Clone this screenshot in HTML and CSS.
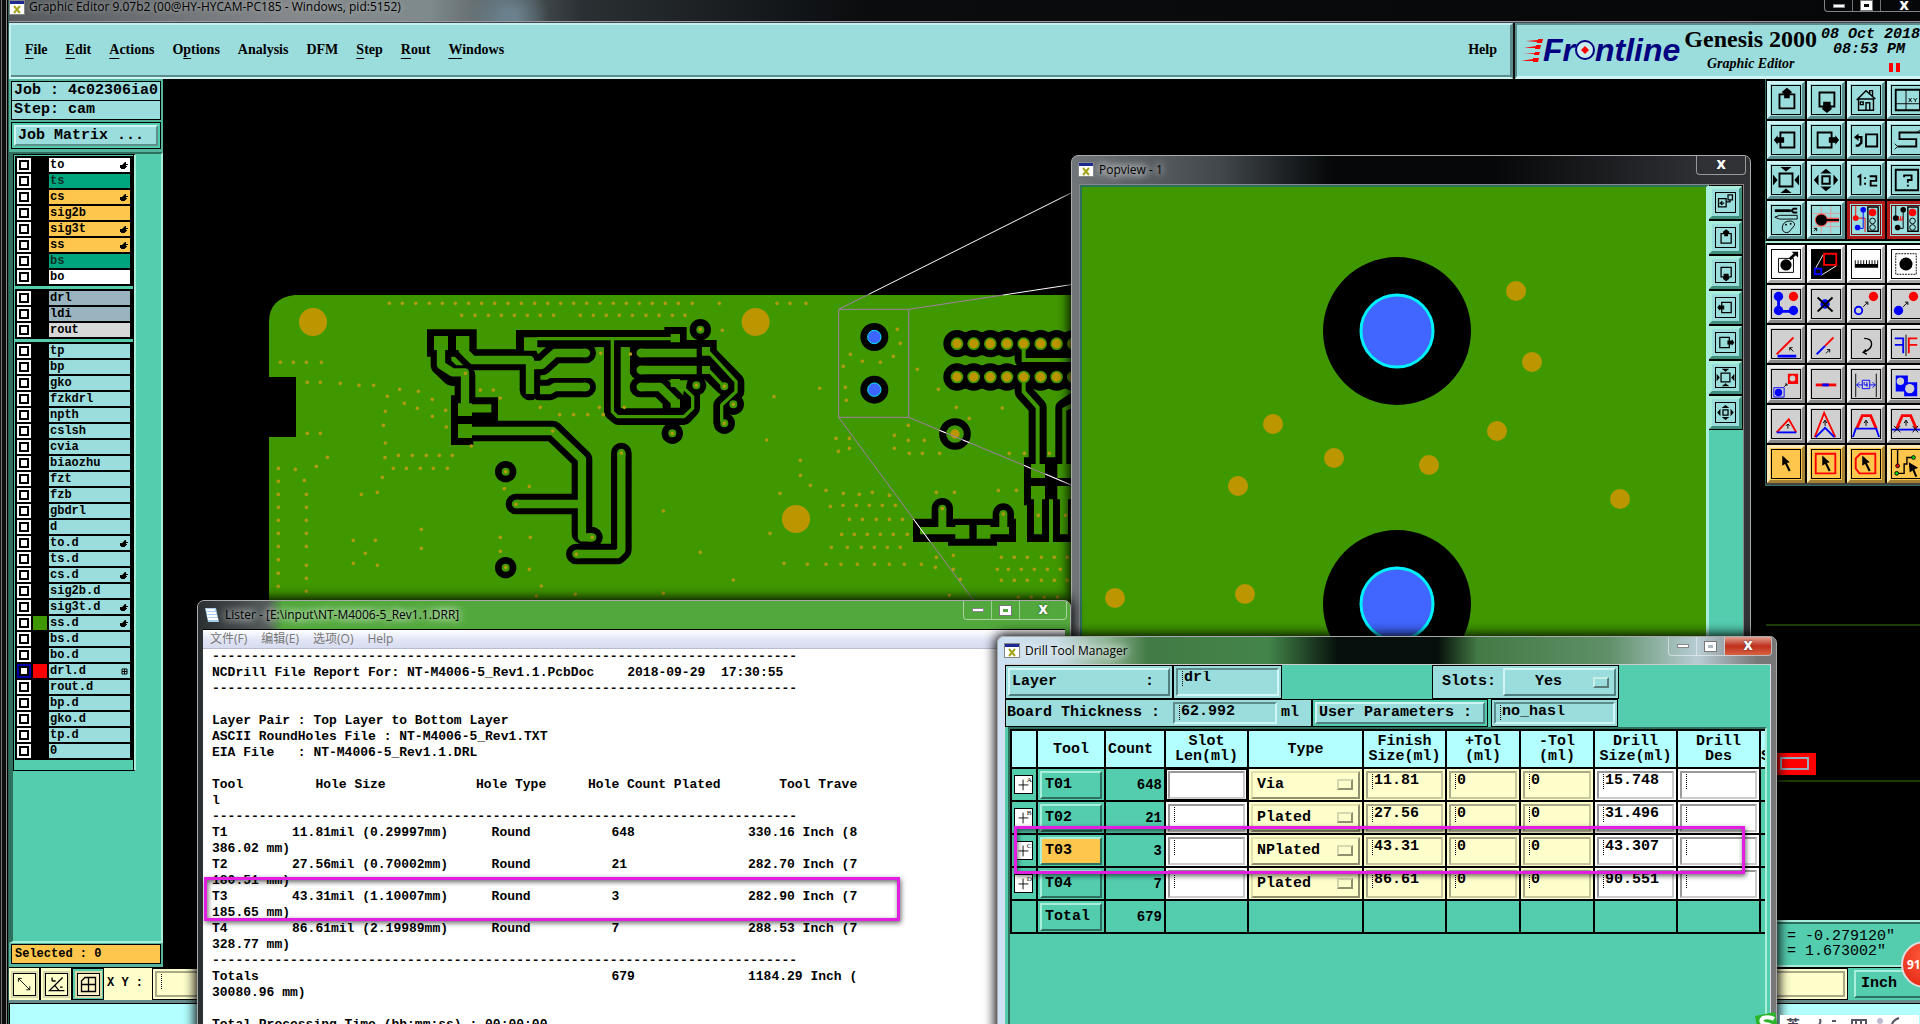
FILE: index.html
```html
<!DOCTYPE html>
<html lang="en">
<head>
<meta charset="utf-8">
<title>Graphic Editor 9.07b2</title>
<link rel="stylesheet" href="styles.css">
</head>
<body>
<svg class="defs" aria-hidden="true">
  <symbol id="hand" viewBox="0 0 8 8"><path d="M0 4h2l3-3h1v2h2v1H6v1h1v1H6v1H5v1H1V7H0z"/></symbol>
  <symbol id="xwin" viewBox="0 0 16 15"><path d="M0 0h16v15H0z" fill="#888"/><path d="M1 4h14v10H1z" fill="#fff"/><path d="M1 1h14v3H1z" fill="#1a2a90"/><path d="M5 6l6 7M11 6l-6 7" stroke="#a5a51a" stroke-width="2"/></symbol>
  <symbol id="i-up" viewBox="0 0 30 30"><path d="M8 9h16v15H8z" fill="none" stroke="#000" stroke-width="2"/><path d="M16 2l5 4v2h-2v5h-6V8h-2V6z"/></symbol>
  <symbol id="i-down" viewBox="0 0 30 30"><path d="M8 7h16v15H8z" fill="none" stroke="#000" stroke-width="2"/><path d="M16 29l-5-4v-2h1v-6h8v6h1v2z"/></symbol>
  <symbol id="i-left" viewBox="0 0 30 30"><path d="M9 7h15v16H9z" fill="none" stroke="#000" stroke-width="2"/><path d="M2 15l4-5v2h7v6H6v2z"/></symbol>
  <symbol id="i-right" viewBox="0 0 30 30"><path d="M6 7h15v16H6z" fill="none" stroke="#000" stroke-width="2"/><path d="M29 15l-4-5v2h-7v6h7v2z"/></symbol>
  <symbol id="i-in" viewBox="0 0 30 30"><path d="M8 8h14v14H8z" fill="none" stroke="#000" stroke-width="2"/><path d="M9 1h12l-6 5zM9 29h12l-6-5zM1 9v12l5-6zM29 9v12l-5-6z"/></symbol>
  <symbol id="i-out" viewBox="0 0 30 30"><path d="M11 11h8v8h-8z" fill="none" stroke="#000" stroke-width="2"/><path d="M9 8h12l-6-5zM9 22h12l-6 5zM7 9v12l-5-6zM23 9v12l5-6z"/></symbol>
  <symbol id="i-pop" viewBox="0 0 30 30"><g fill="none" stroke="#000" stroke-width="2"><path d="M4 9h12v13H4zM19 3h7v8h-7zM16 14h6v-3"/><path d="M13 16H7l3-3m-3 3l3 3"/></g></symbol>
</svg>

<div class="desktop">
  <div class="frame-edge"></div>
  <div class="editor">
    <header class="titlebar">
      <svg class="app-icon" width="16" height="15"><use href="#xwin"/></svg>
      <h1>Graphic Editor 9.07b2 (00@HY-HYCAM-PC185 - Windows, pid:5152)</h1>
      <div class="win-buttons main-buttons"><button aria-label="Minimize"><i class="min"></i></button><button aria-label="Maximize"><i class="max"></i></button><button class="close" aria-label="Close">x</button></div>
    </header>

    <div class="topbar">
      <nav class="menubar">
        <button><u>F</u>ile</button><button><u>E</u>dit</button><button><u>A</u>ctions</button><button>O<u>p</u>tions</button><button>Analysis</button><button>DFM</button><button><u>S</u>tep</button><button><u>R</u>out</button><button><u>W</u>indows</button>
        <button class="help">Help</button>
      </nav>
      <div class="brand">
        <div class="logo">
          <svg width="22" height="24" viewBox="0 0 22 24" fill="#f00"><path d="M5 3l12-1V1h5l-1 4h-5V4zM3 10l12-2V7h5l-1 4h-5v-1zM2 16l12-1v-1h5l-1 3h-5v-1zM0 23l12-2v-1h6l-1 4h-5v-1z"/></svg>
          <span>Fr</span><svg width="20" height="20" viewBox="0 0 20 20"><circle cx="10" cy="10" r="9" fill="#c8eef0" stroke="#000080" stroke-width="2"/><path d="M10 6l4 4-4 4-4-4z" fill="#f00"/></svg><span>ntline</span>
        </div>
        <div class="product"><strong>Genesis 2000</strong><em>Graphic Editor</em></div>
        <div class="clock"><span>08 Oct 2018</span><span class="time">08:53 PM</span><i class="pause"></i></div>
      </div>
    </div>

    <div class="workspace">
      <aside class="side">
        <div class="job"><p>Job : 4c02306ia0</p><p>Step: cam</p><div class="matrix"><button>Job Matrix ...</button></div></div>
        <div class="layers">
          <div class="layer-frame">
            <ul>
              <li><label><input type="checkbox"><i></i><span class="white">to<svg><use href="#hand"/></svg></span></label></li>
              <li><label><input type="checkbox"><i></i><span class="mask">ts</span></label></li>
              <li><label><input type="checkbox"><i></i><span class="amber">cs<svg><use href="#hand"/></svg></span></label></li>
              <li><label><input type="checkbox"><i></i><span class="amber">sig2b</span></label></li>
              <li><label><input type="checkbox"><i></i><span class="amber">sig3t<svg><use href="#hand"/></svg></span></label></li>
              <li><label><input type="checkbox"><i></i><span class="amber">ss<svg><use href="#hand"/></svg></span></label></li>
              <li><label><input type="checkbox"><i></i><span class="mask">bs</span></label></li>
              <li><label><input type="checkbox"><i></i><span class="white">bo</span></label></li>
            </ul>
            <ul>
              <li><label><input type="checkbox"><i></i><span class="steel">drl</span></label></li>
              <li><label><input type="checkbox"><i></i><span class="steel">ldi</span></label></li>
              <li><label><input type="checkbox"><i></i><span class="silver">rout</span></label></li>
            </ul>
            <ul>
              <li><label><input type="checkbox"><i></i><span>tp</span></label></li>
              <li><label><input type="checkbox"><i></i><span>bp</span></label></li>
              <li><label><input type="checkbox"><i></i><span>gko</span></label></li>
              <li><label><input type="checkbox"><i></i><span>fzkdrl</span></label></li>
              <li><label><input type="checkbox"><i></i><span>npth</span></label></li>
              <li><label><input type="checkbox"><i></i><span>cslsh</span></label></li>
              <li><label><input type="checkbox"><i></i><span>cvia</span></label></li>
              <li><label><input type="checkbox"><i></i><span>biaozhu</span></label></li>
              <li><label><input type="checkbox"><i></i><span>fzt</span></label></li>
              <li><label><input type="checkbox"><i></i><span>fzb</span></label></li>
              <li><label><input type="checkbox"><i></i><span>gbdrl</span></label></li>
              <li><label><input type="checkbox"><i></i><span>d</span></label></li>
              <li><label><input type="checkbox"><i></i><span>to.d<svg><use href="#hand"/></svg></span></label></li>
              <li><label><input type="checkbox"><i></i><span>ts.d</span></label></li>
              <li><label><input type="checkbox"><i></i><span>cs.d<svg><use href="#hand"/></svg></span></label></li>
              <li><label><input type="checkbox"><i></i><span>sig2b.d</span></label></li>
              <li><label><input type="checkbox"><i></i><span>sig3t.d<svg><use href="#hand"/></svg></span></label></li>
              <li><label><input type="checkbox"><i class="shown"></i><span>ss.d<svg><use href="#hand"/></svg></span></label></li>
              <li><label><input type="checkbox"><i></i><span>bs.d</span></label></li>
              <li><label><input type="checkbox"><i></i><span>bo.d</span></label></li>
              <li><label><input type="checkbox" class="work"><i class="active"></i><span>drl.d<svg class="snap" viewBox="0 0 8 8"><path d="M2 2h5v5H2zM4.500 2v5M2 4.500h5" fill="none" stroke="#000"/></svg></span></label></li>
              <li><label><input type="checkbox"><i></i><span>rout.d</span></label></li>
              <li><label><input type="checkbox"><i></i><span>bp.d</span></label></li>
              <li><label><input type="checkbox"><i></i><span>gko.d</span></label></li>
              <li><label><input type="checkbox"><i></i><span>tp.d</span></label></li>
              <li><label><input type="checkbox"><i></i><span>0</span></label></li>
            </ul>
          </div>
        </div>
        <p class="selected">Selected : 0</p>
      </aside>

      <main class="canvas">
        <svg width="1602" height="888" viewBox="163 79 1602 888">
          <path fill="#409800" d="M290 295H1400V800H269V437h27V377H269V322q0-24 26-27z"/>
          <g transform="translate(260 290) scale(.33333)">
            <path d="M501 118H650V178H768V120H1213V111H1280V150H1370V195H1310V252H1110V172H830V240H768V200H501zM573 316H640V322H714V400H640V465H573zM1208 322h80v40h-80z"/>
            <g fill="none" stroke="#000" stroke-width="62" stroke-linejoin="round" stroke-linecap="round">
              <path d="M543 160V225L577 257H615V355M608 160V180L638 210H810V300M810 225H845L885 189H977M840 300H870L885 291H977M1140 189H1320M1140 240H1320M1140 291H1200L1245 335M615 423H878L966 508V730L997 742M966 642H768M1084 489V780L1072 792H949"/>
              <path stroke-width="50" d="M1057 150V365L1075 380H1272L1295 355V310M1340 185L1428 275V305L1385 345V395M1340 240L1392 290"/>
            </g>
            <path fill="#409800" d="M1083 172H1108V352H1083zM1008 172h21v180h-21zM862 262l20-20h125v22H862z"/>
            <g><circle cx="1321" cy="119" r="32"/><circle cx="1309" cy="286" r="30"/><circle cx="1420" cy="343" r="32"/><circle cx="1393" cy="400" r="32"/><circle cx="1237" cy="430" r="32"/><circle cx="737" cy="545" r="32"/><circle cx="737" cy="833" r="32"/></g>
            <path fill="#409800" d="M522 138h42v42h-42zM588 138h40v42h-40zM792 142h40v40h-40zM1232 132h28v25h-28zM1326 171h24v26h-24zM1326 228h24v24h-24zM1232 267h28v24h-28zM1232 328h28v25h-28zM594 340h42v38h-42zM594 402h42v42h-42z"/>
            <g fill="none" stroke="#409800" stroke-width="25" stroke-linejoin="round">
              <path d="M543 160V225L577 247H615V355H694M608 160V180L638 210H810V312M810 225H845L885 189H977M840 300H870L885 291H977M1140 189H1310M1140 240H1310M1140 291H1200L1245 335M615 423H878L966 508V742H997M966 642H768M1084 489V780L1072 792H949"/>
              <path stroke-linecap="round" d="M970 189h8M970 291h8M1142 189h8M1142 240h8M1142 291h8M1084 489v8M768 642h8M949 792h8M997 742h-8"/>
              <path stroke-width="10" d="M830 146H1240M1057 150V365L1072 380H1272L1298 355V320L1258 282M1345 185L1428 275V305L1385 345V395M1345 240L1392 290"/>
            </g>
            <path stroke="#409800" stroke-width="24" stroke-linecap="round" d="M1321 119h0M1309 286h0M1420 343h0M1393 400h0M1393 289h0M1237 430h0M737 545h0M737 833h0"/>
            <path fill="#bb9600" d="M117 96a42 42 0 1 0 84 0a42 42 0 1 0-84 0M1445 96a42 42 0 1 0 84 0a42 42 0 1 0-84 0"/>
            <path fill="none" stroke="#b09b10" stroke-width="11" stroke-linecap="round" d="M388 40h0m39 0h0m40 0h0m41 0h0m39 0h0m39 0h0m40 0h0m39 0h0m39 0h0m40 0h0m40 0h0m40 0h0m39 0h0m39 0h0m39 0h0m39 0h0m40 0h0m40 0h0m39 0h0m39 0h0m39 0h0m39 0h0m39 0h0m42 0h0m81 0h0M605 76h0m40 0h0m40 0h0m39 0h0m39 0h0m39 0h0m39 0h0m40 0h0m80 0h0m39 0h0m39 0h0m39 0h0m39 0h0m41 0h0m39 0h0m40 0h0m38 0h0M61 217h0m39 0h0m39 0h0m45 0h0M142 277h0m39 0h0m60 3h0m56 6h0m44 0h0m78 12h0m56 6h0M382 319h0M433 340h0M517 328h0M472 355h0M376 364h0M517 379h0M557 361h0M370 406h0M559 411h0M142 430h0m39 0h0M376 459h0M375 503h0M415 496h0m42 0h0m42 0h0m39 0h0m39 0h0M400 535h0m39 0h0m42 0h0m39 0h0m42 0h0M634 468h0M202 502h0M169 529h0M106 538h0M133 571h0M367 562h0M304 613h0M352 607h0M55 535h0m0 39h0m0 39h0m0 39h0m0 39h0m0 39h0m0 39h0m0 40h0m0 41h0m0 39h0M139 613h0m0 39h0m0 39h0m0 39h0m0 39h0m0 57h0m0 39h0m0 39h0M484 718h0m0 57h0M280 751h0m66 0h0M316 790h0M280 820h0M352 826h0M616 250h0M661 300h0m39 0h0M721 324h0M841 352h0M899 374h0m42 0h0m42 0h0m47 0h0M1022 190h0M1018 352h0M1093 352h0M1111 192h0M878 423h0M1387 121h0M1321 118h0M1309 286h0M1393 289h0M1420 343h0M1393 400h0M1237 430h0M1084 489h0M737 545h0M733 596h0M808 589h0M768 643h0M1210 663h0M997 742h0M811 742h0M721 742h0m0 42h0M949 793h0M1321 787h0M737 832h0M808 838h0M844 888h0M829 919h0M946 913h0M1210 910h0M1420 870h0"/>
          </g>
          <g transform="translate(800 280) scale(.33333)">
            <g fill="none" stroke="#000" stroke-linecap="round" stroke-linejoin="round">
              <path stroke-width="82" d="M471 191h0m50 0h0m50 0h0m50 0h0m50 0h0m51 0h0m48 0h0m50 0h0M471 291h0m50 0h0m50 0h0m50 0h0m50 0h0m51 0h0m48 0h0m50 0h0"/>
              <path stroke-width="70" d="M471 191H830M471 291H830"/>
              <path stroke-width="54" d="M671 200V238H830M671 310V335L713 382V560M830 360L793 385V560"/>
              <path stroke-width="64" d="M427 686V725M610 702V730"/>
            </g>
            <path d="M672 532H830V676H812V786H759V658H747V786H681V676H672zM339 716H648V786H591V797H444V786H339z"/>
            <circle cx="465" cy="462" r="37" fill="#409800" stroke="#000" stroke-width="21"/>
            <path fill="none" stroke="#409800" stroke-width="12" d="M671 191V240H830M671 291V335L713 382V560M830 370L793 388V560"/>
            <path fill="#409800" d="M693 552h42v42h-42zM772 552h50v42h-50zM693 618h42v40h-42zM772 618h50v40h-50zM702 650h24v113h-24zM780 650h24v113h-24zM747 676h12v115h-12zM360 741h106v-6h42v41h-42v-13H360zM530 735h41v6h56v22h-56v13h-41zM415 686h24v60h-24zM598 702h24v50h-24z"/>
            <path stroke="#409800" stroke-width="24" stroke-linecap="round" d="M427 686h0M610 702h0"/>
            <path stroke="#409800" stroke-width="38" stroke-linecap="round" d="M471 191h0m50 0h0m50 0h0m50 0h0m50 0h0m51 0h0m48 0h0m50 0h0M471 291h0m50 0h0m50 0h0m50 0h0m50 0h0m51 0h0m48 0h0m50 0h0"/>
            <path stroke="#bb9600" stroke-width="28" stroke-linecap="round" d="M471 191h0m50 0h0m50 0h0m50 0h0m50 0h0m51 0h0m48 0h0m50 0h0M471 291h0m50 0h0m50 0h0m50 0h0m50 0h0m51 0h0m48 0h0m50 0h0M465 462h0"/>
            <circle cx="223" cy="171" r="42"/><circle cx="223" cy="329" r="42"/>
            <g fill="#3c64ff" stroke="#00e6ff" stroke-width="3"><circle cx="223" cy="171" r="20"/><circle cx="223" cy="329" r="20"/></g>
            <circle cx="-12" cy="717" r="42" fill="#bb9600"/>
            <path fill="none" stroke="#b09b10" stroke-width="11" stroke-linecap="round" d="M18 70h0M292 148h0M301 190h0M280 229h0M241 247h0M187 244h0M151 223h0M130 259h0M136 322h0M139 361h0M352 268h0M59 325h0M415 328h0M469 382h0M607 384h0M508 415h0M325 436h0M283 466h0M325 481h0M373 481h0M283 505h0M328 520h0M367 520h0M419 520h0M628 520h0M673 520h0M748 520h0M108 475h0M148 475h0M148 505h0M115 514h0M1 541h0M1 586h0M31 616h0M78 631h0M130 640h0M178 643h0M217 637h0M268 646h0M91 679h0M129 676h0m40 0h0m39 0h0m39 0h0m39 0h0M148 718h0m39 0h0m42 0h0m39 0h0m39 0h0M125 763h0m38 0h0m39 0h0m39 0h0m39 0h0m42 0h0M94 802h0m48 0h0m42 0h0m39 0h0m39 0h0m39 0h0M22 853h0m56 0h0m45 0h0m49 0h0m51 0h0m45 0h0m45 0h0m51 0h0M409 637h0m54 0h0M595 631h0m54 0h0M427 686h0M610 702h0M715 706h0M797 706h0M409 832h0M460 826h0M406 862h0M460 868h0M481 898h0M448 946h0M604 832h0m39 0h0m39 0h0m42 0h0m39 0h0m39 0h0M592 868h0m33 0h0m39 0h0m39 0h0m39 0h0m39 0h0M604 901h0m39 0h0m39 0h0m42 0h0m39 0h0m39 0h0M655 952h0m39 0h0m39 0h0m39 0h0M-30 70h0m-39 0h0M-78 350h0M-100 480h0M-60 640h0M-90 760h0M-48 850h0"/>
            <g fill="none" stroke="#a080a5" stroke-width="3"><path d="M116 88H326V412H116zM116 88L206 43M326 88L610 45M326 412L830 622M116 412L520 960"/>
            <path stroke="#fff" d="M206 43L813 -261M610 45L813 14M418 451l20 8M488 480l20 8M672 556l20 9M736 582L830 622M340 717l50 68"/></g>
          </g>
        </svg>
      </main>

      <section class="tools">
        <div class="palette view-tools">
          <button aria-label="Pan up"><svg><use href="#i-up"/></svg></button>
          <button aria-label="Pan down"><svg><use href="#i-down"/></svg></button>
          <button aria-label="Home"><svg viewBox="0 0 30 30"><path d="M7 14h16v12H7zM5 15L15 5l10 9M15 26v-8h4v8M9 17h3v3H9zM19 8V5h3v6" fill="none" stroke="#000" stroke-width="1.500"/></svg></button>
          <button aria-label="XY window"><svg viewBox="0 0 30 30"><path d="M4 4h26v22H4z" fill="none" stroke="#000" stroke-width="2"/><path d="M15 4v22M4 19h26M18 13l3 4m0-4l-3 4M23 13l2 2v2m2-4l-2 2" fill="none" stroke="#000"/></svg></button>
          <button aria-label="Pan left"><svg><use href="#i-left"/></svg></button>
          <button aria-label="Pan right"><svg><use href="#i-right"/></svg></button>
          <button aria-label="Previous view"><svg viewBox="0 0 30 30"><path d="M15 9h12v13H15z" fill="none" stroke="#000" stroke-width="2"/><path d="M4 21h3l3-3v-6H6" fill="none" stroke="#000" stroke-width="2.500"/><path d="M2 12l5-4v8z"/></svg></button>
          <button aria-label="Serpentine"><svg viewBox="0 0 30 30"><path d="M30 7H8v7h18v8H6" fill="none" stroke="#000" stroke-width="2"/><path d="M27 7l3-3M6 22l-3-3m3 3l-3 3" stroke="#000"/></svg></button>
          <button aria-label="Zoom in"><svg><use href="#i-in"/></svg></button>
          <button aria-label="Zoom out"><svg><use href="#i-out"/></svg></button>
          <button aria-label="Scale one to two"><svg viewBox="0 0 30 30"><path d="M6 12l3-2v11M19 11h7v5h-6v5h7M14 12v2m0 4v2" fill="none" stroke="#000" stroke-width="2"/></svg></button>
          <button aria-label="Query"><svg viewBox="0 0 30 30"><path d="M4 4h24v22H4z" fill="none" stroke="#000" stroke-width="2"/><path d="M13 12v-2h8v5h-4v3m0 2v2" fill="none" stroke="#000" stroke-width="2"/></svg></button>
          <button aria-label="Settings"><svg viewBox="0 0 30 30"><path d="M3 5h17" stroke="#000" stroke-width="3"/><path d="M27 3h-4l-2 2 2 2h4" fill="none" stroke="#000" stroke-width="2"/><path d="M3 12l5-2h19v4H8z M11 24q0-8 9-8 5 1 4 5l-6 7q-6 2-7-4z" fill="none" stroke="#000"/><circle cx="15" cy="20" r="1"/><circle cx="20" cy="19" r="1"/></svg></button>
          <button aria-label="Snap"><svg viewBox="0 0 30 30"><path d="M10 0v30M20 0v30M0 8h30M0 22h30" stroke="#d8a0a0"/><path d="M11 15h18" stroke="#f55" stroke-width="5"/><circle cx="10" cy="15" r="7" fill="#f55"/><circle cx="10" cy="15" r="6"/><path d="M11 15h18" stroke="#000" stroke-width="2"/><path d="M2 27l3-3m-3 0h3v3" fill="none" stroke="#000"/></svg></button>
          <button class="red" aria-label="DRC net"><svg viewBox="0 0 30 30"><path d="M4 0v13h10v15" fill="none" stroke="#f00"/><path d="M12 4v20H6" fill="none" stroke="#00f"/><circle cx="4" cy="13" r="3" fill="#f00"/><circle cx="12" cy="4" r="3" fill="#00f"/><circle cx="6" cy="23" r="3" fill="#00f"/><path d="M17 1h11v26H17z" fill="none" stroke="#000" stroke-width="1.500"/><circle cx="22" cy="7" r="4" fill="#f00"/><circle cx="22" cy="16" r="3" fill="none" stroke="#000"/><circle cx="22" cy="23" r="3" fill="none" stroke="#000"/></svg></button>
          <button class="red" aria-label="DRC spacing"><svg viewBox="0 0 30 30"><path d="M4 0v13M12 4v20H6" fill="none" stroke="#000"/><path d="M6 15h6M7 11v4M9 11v4M11 11v4" stroke="#f00"/><circle cx="4" cy="13" r="3"/><circle cx="12" cy="4" r="3"/><circle cx="6" cy="23" r="3"/><path d="M17 1h11v26H17z" fill="none" stroke="#000" stroke-width="1.500"/><circle cx="22" cy="7" r="4" fill="#f00"/><circle cx="22" cy="16" r="3" fill="none" stroke="#000"/><circle cx="22" cy="23" r="3" fill="none" stroke="#000"/></svg></button>
        </div>
        <div class="palette edit-tools">
          <button class="white" aria-label="Move feature"><svg viewBox="0 0 30 30"><path d="M7 9h16v15H7z" fill="none" stroke="#000"/><circle cx="15" cy="16" r="6"/><path d="M19 10l6-6" stroke="#000" stroke-width="3"/><path d="M21 2h7v6z"/></svg></button>
          <button class="white" aria-label="Popup view"><svg viewBox="0 0 30 30"><path d="M0 0h30v30H0z"/><path d="M12 5L3 21M26 17L10 27" stroke="#fff"/><path d="M13 4h13v12H13z" fill="none" stroke="#f00" stroke-width="2"/><path d="M3 20h7v6H3z" fill="none" stroke="#00f" stroke-width="2"/></svg></button>
          <button class="white" aria-label="Measure"><svg viewBox="0 0 30 30"><path d="M3 11h1v4h2v-4h1v4h2v-4h1v4h2v-4h1v4h2v-4h1v4h2v-4h1v4h2v-4h1v4h2v-4h1v4h2v-4h1v8H3z"/></svg></button>
          <button class="white" aria-label="Select feature"><svg viewBox="0 0 30 30"><path d="M4 4h22v22H4z" fill="none" stroke="#000" stroke-dasharray="2 1"/><circle cx="15" cy="15" r="7"/></svg></button>
          <button aria-label="Net add"><svg viewBox="0 0 30 30"><path d="M7 7v16h16" fill="none" stroke="#00f" stroke-width="3"/><g fill="#00f"><circle cx="7" cy="7" r="5"/><circle cx="7" cy="22" r="5"/><circle cx="23" cy="22" r="5"/></g><circle cx="23" cy="7" r="5" fill="#f00"/></svg></button>
          <button aria-label="Delete"><svg viewBox="0 0 30 30"><circle cx="14" cy="15" r="5" fill="#00f"/><path d="M6 8l16 15M22 8L6 23" stroke="#000" stroke-width="2"/></svg></button>
          <button aria-label="Change symbol"><svg viewBox="0 0 30 30"><circle cx="7" cy="22" r="4" fill="none" stroke="#00f" stroke-width="2"/><circle cx="23" cy="7" r="5" fill="#f00"/><path d="M12 18l5-5m-3 0h3v3" fill="none" stroke="#000"/></svg></button>
          <button aria-label="Move"><svg viewBox="0 0 30 30"><circle cx="7" cy="22" r="5" fill="#00f"/><circle cx="23" cy="7" r="5" fill="#f00"/><path d="M12 18l5-5m-3 0h3v3" fill="none" stroke="#000"/></svg></button>
          <button aria-label="Change angle"><svg viewBox="0 0 30 30"><path d="M5 26L23 8" stroke="#f00" stroke-width="2"/><path d="M6 28h20" stroke="#00f" stroke-width="3"/><path d="M23 23l-4-4m0 3v-3h3" fill="none" stroke="#000"/></svg></button>
          <button aria-label="Extend line"><svg viewBox="0 0 30 30"><path d="M5 26l9-9" stroke="#00f" stroke-width="2"/><path d="M14 17l9-9" stroke="#f00" stroke-width="2"/><path d="M15 25l4-4m-3 0h3v3" fill="none" stroke="#000"/></svg></button>
          <button aria-label="Rotate"><svg viewBox="0 0 30 30"><path d="M13 9q8 0 8 6t-9 9m3-3l-3 3 4 2" fill="none" stroke="#000" stroke-width="1.500"/></svg></button>
          <button aria-label="Mirror"><svg viewBox="0 0 30 30"><path d="M3 9h9v16M3 16h9" fill="none" stroke="#00f" stroke-width="2"/><path d="M27 9h-9v16M27 16h-9" fill="none" stroke="#f00" stroke-width="2"/><path d="M15 5v23" stroke="#000"/></svg></button>
          <button aria-label="Copy"><svg viewBox="0 0 30 30"><path d="M2 19h11v10H2z" fill="none" stroke="#00f"/><circle cx="7" cy="24" r="4" fill="#00f"/><path d="M17 4h11v11H17z" fill="#f00"/><circle cx="22" cy="9" r="3" fill="#d0d0d0"/><path d="M13 18l3-3m-2 0h2v2" fill="none" stroke="#000"/></svg></button>
          <button aria-label="Break line"><svg viewBox="0 0 30 30"><path d="M4 16h22" stroke="#f00" stroke-width="3"/><path d="M11 16h7" stroke="#00f" stroke-width="3"/></svg></button>
          <button aria-label="Spacing"><svg viewBox="0 0 30 30"><path d="M4 4v25M26 4v25" stroke="#000"/><path d="M11 11h8v9h-8zM5 16h6m8 0h6M8 13l-3 3 3 3M22 13l3 3-3 3M13 13v3h4m-1-3v5" fill="none" stroke="#00f"/></svg></button>
          <button aria-label="Surface"><svg viewBox="0 0 30 30"><path d="M4 6h13v7h10v15H13v-5H4z" fill="#00f"/><circle cx="9" cy="12" r="4" fill="#d0d0d0"/><circle cx="19" cy="20" r="5" fill="#d0d0d0"/></svg></button>
          <button aria-label="Triangle"><svg viewBox="0 0 30 30"><path d="M5 24L18 10l8 14" fill="none" stroke="#f00" stroke-width="2"/><path d="M5 24h21" stroke="#00f" stroke-width="2"/><path d="M17 20v-5m-2 2l2-2 2 2" fill="none" stroke="#000"/></svg></button>
          <button aria-label="Stretch corner"><svg viewBox="0 0 30 30"><path d="M3 29L13 3l12 26" fill="none" stroke="#f00" stroke-width="2"/><path d="M4 29l10-10 10 10" fill="none" stroke="#00f" stroke-width="2"/><path d="M14 17v-6m-2 3l2-3 2 3" fill="none" stroke="#000"/></svg></button>
          <button aria-label="Stretch segment"><svg viewBox="0 0 30 30"><path d="M5 20l6-14h9l6 14" fill="none" stroke="#f00" stroke-width="3"/><path d="M1 29l3-9h22l3 9" fill="none" stroke="#00f" stroke-width="2"/><path d="M15 17v-6m-2 3l2-3 2 3" fill="none" stroke="#000"/></svg></button>
          <button aria-label="Stretch with trim"><svg viewBox="0 0 30 30"><path d="M5 20l6-14h9l6 14" fill="none" stroke="#f00" stroke-width="3"/><path d="M0 21h30" stroke="#00f" stroke-width="2"/><path d="M15 17v-6m-2 3l2-3 2 3M2 17l7 7m0-7l-7 7M22 17l6 7m0-7l-6 7" fill="none" stroke="#000"/></svg></button>
          <button class="pick" aria-label="Select"><svg viewBox="0 0 30 30"><path d="M11 6l8 7-3 1 4 8-2 1-4-8-3 2z"/></svg></button>
          <button class="pick" aria-label="Select rectangle"><svg viewBox="0 0 30 30"><path d="M4 4h21v21H4z" fill="none" stroke="#f00" stroke-width="2"/><path d="M11 6l8 7-3 1 4 8-2 1-4-8-3 2z"/></svg></button>
          <button class="pick" aria-label="Select polygon"><svg viewBox="0 0 30 30"><path d="M9 4h16v21H8l-4-5V9z" fill="none" stroke="#f00" stroke-width="2"/><path d="M11 6l8 7-3 1 4 8-2 1-4-8-3 2z"/></svg></button>
          <button class="pick" aria-label="Select net"><svg viewBox="0 0 30 30"><path d="M6 0v16M6 25h7V15h3V8h7" fill="none" stroke="#000" stroke-width="1.500"/><circle cx="6" cy="17" r="2" fill="#f00" stroke="#000"/><circle cx="5" cy="25" r="2" fill="#0d0" stroke="#000"/><circle cx="23" cy="8" r="2" fill="#0d0" stroke="#000"/><path d="M18 13l10 6-4 2 3 7-2 1-3-7-3 2z"/></svg></button>
        </div>
        <div class="overview">
          <svg width="155" height="433" viewBox="1765 487 155 433"><path d="M1766 626h154M1766 782h154" stroke="#3a7a10"/><path d="M1770 754h46v22h-46z" fill="#f00"/><path d="M1781 759h27v11h-27z" fill="none" stroke="#9ab" stroke-width="2"/></svg>
        </div>
        <p class="coords"><span>= -0.279120"</span><span>= 1.673002"</span></p>
      </section>
    </div>

    <form class="command">
      <button type="button" aria-label="Absolute"><svg viewBox="0 0 24 24"><path d="M5 5l13 13M5 9V5h4M18 14v4h-4" fill="none" stroke="#000"/></svg></button>
      <button type="button" aria-label="Angle"><svg viewBox="0 0 24 24"><path d="M19 4L4 19h17M7 8V4m0 4h4M10 13l5 6M16 15h3" fill="none" stroke="#000" stroke-width="1.500"/></svg></button>
      <button type="button" class="grid-on" aria-label="Grid"><svg viewBox="0 0 24 24"><path d="M4 8l4-4h12v16H4zM12 4v16M4 12h16" fill="none" stroke="#000" stroke-width="1.500"/></svg></button>
      <label for="xy">X Y :</label>
      <span class="entry"><span class="field"><input id="xy" type="text"></span></span>
      <span class="units"><button type="button">Inch</button></span>
    </form>
    <footer class="status"></footer>
  </div>

  <section class="window popview" aria-label="Popview - 1">
    <header><svg width="16" height="15"><use href="#xwin"/></svg><h2>Popview - 1</h2><div class="win-buttons"><button class="close" aria-label="Close">x</button></div></header>
    <div class="pop-body">
      <div class="pop-canvas">
        <svg width="623" height="513" viewBox="1082 187 623 513">
          <circle cx="1397" cy="331" r="74"/><circle cx="1397" cy="604" r="74"/>
          <g fill="#4066ff" stroke="#00f0ff" stroke-width="3"><circle cx="1397" cy="331" r="36"/><circle cx="1397" cy="604" r="36"/></g>
          <g fill="#bb9600"><circle cx="1516" cy="291" r="10"/><circle cx="1532" cy="362" r="10"/><circle cx="1497" cy="431" r="10"/><circle cx="1273" cy="424" r="10"/><circle cx="1334" cy="458" r="10"/><circle cx="1429" cy="465" r="10"/><circle cx="1238" cy="486" r="10"/><circle cx="1620" cy="499" r="10"/><circle cx="1115" cy="598" r="10"/><circle cx="1245" cy="594" r="10"/><circle cx="1253" cy="657" r="10"/></g>
        </svg>
      </div>
      <div class="pop-tools">
        <button aria-label="Pop out"><svg><use href="#i-pop"/></svg></button>
        <button aria-label="Up"><svg><use href="#i-up"/></svg></button>
        <button aria-label="Down"><svg><use href="#i-down"/></svg></button>
        <button aria-label="Left"><svg><use href="#i-left"/></svg></button>
        <button aria-label="Right"><svg><use href="#i-right"/></svg></button>
        <button aria-label="In"><svg><use href="#i-in"/></svg></button>
        <button aria-label="Out"><svg><use href="#i-out"/></svg></button>
      </div>
    </div>
  </section>

  <section class="window lister" aria-label="Lister">
    <header><svg width="16" height="16" viewBox="0 0 16 16"><path d="M1 1h11l3 14H4z" fill="#a9cdf0"/><path d="M2 3h9M3 6h9M3 9h10M4 12h10" stroke="#fff" stroke-width="2"/></svg><h2>Lister - [E:\input\NT-M4006-5_Rev1.1.DRR]</h2><div class="win-buttons"><button aria-label="Minimize"><i class="min"></i></button><button aria-label="Maximize"><i class="max"></i></button><button class="close" aria-label="Close">x</button></div></header>
    <nav><button>文件(F)</button><button>编辑(E)</button><button>选项(O)</button><button>Help</button></nav>
    <div class="report">
      <p>---------------------------------------------------------------------------</p>
      <p class="head"><span>NCDrill File Report For: NT-M4006-5_Rev1.1.PcbDoc</span><span>2018-09-29  17:30:55</span></p>
      <p>---------------------------------------------------------------------------</p>
      <p></p>
      <p>Layer Pair : Top Layer to Bottom Layer</p>
      <p>ASCII RoundHoles File : NT-M4006-5_Rev1.TXT</p>
      <p>EIA File   : NT-M4006-5_Rev1.1.DRL</p>
      <p></p>
      <table>
        <colgroup><col class="c-tool"><col class="c-size"><col class="c-type"><col class="c-count"><col class="c-travel"></colgroup>
        <tr><th>Tool</th><th>   Hole Size</th><th>Hole Type</th><th>Hole Count Plated</th><th>    Tool Trave</th></tr>
        <tr><td colspan="5">l</td></tr>
        <tr><td colspan="5">---------------------------------------------------------------------------</td></tr>
        <tr><td>T1</td><td>11.81mil (0.29997mm)</td><td>  Round</td><td>   648</td><td>330.16 Inch (8</td></tr>
        <tr><td colspan="5">386.02 mm)</td></tr>
        <tr><td>T2</td><td>27.56mil (0.70002mm)</td><td>  Round</td><td>   21</td><td>282.70 Inch (7</td></tr>
        <tr><td colspan="5">180.51 mm)</td></tr>
        <tr><td>T3</td><td>43.31mil (1.10007mm)</td><td>  Round</td><td>   3</td><td>282.90 Inch (7</td></tr>
        <tr><td colspan="5">185.65 mm)</td></tr>
        <tr><td>T4</td><td>86.61mil (2.19989mm)</td><td>  Round</td><td>   7</td><td>288.53 Inch (7</td></tr>
        <tr><td colspan="5">328.77 mm)</td></tr>
        <tr><td colspan="5">---------------------------------------------------------------------------</td></tr>
        <tr><td>Totals</td><td></td><td></td><td>   679</td><td>1184.29 Inch (</td></tr>
        <tr><td colspan="5">30080.96 mm)</td></tr>
      </table>
      <p></p>
      <p>Total Processing Time (hh:mm:ss) : 00:00:00</p>
    </div>
    <div class="mark mark-report"></div>
  </section>

  <section class="window drill" aria-label="Drill Tool Manager">
    <header><svg width="16" height="15"><use href="#xwin"/></svg><h2>Drill Tool Manager</h2><div class="win-buttons"><button aria-label="Minimize"><i class="min"></i></button><button aria-label="Maximize"><i class="max"></i></button><button class="close hot" aria-label="Close">x</button></div></header>
    <div class="drill-body">
      <div class="params">
        <div class="box layer-box"><button>Layer<span>:</span></button></div>
        <div class="box layer-value"><span class="field"><input aria-label="Layer" value="drl"></span></div>
        <div class="box slots"><label for="slots">Slots:</label><span class="choice"><select id="slots"><option>Yes</option></select></span></div>
      </div>
      <div class="params second">
        <div class="box thick"><label for="thick">Board Thickness :</label><span class="field"><input id="thick" value="62.992"></span><span>ml</span></div>
        <div class="box user"><button>User Parameters :</button></div>
        <div class="box user-value"><span class="field"><input aria-label="User parameters" value="no_hasl"></span></div>
      </div>
      <div class="grid-area">
        <table>
          <colgroup><col class="d-mark"><col class="d-tool"><col class="d-count"><col class="d-wide"><col class="d-type"><col class="d-wide"><col class="d-tol"><col class="d-tol"><col class="d-wide"><col class="d-wide"><col class="d-wide"></colgroup>
          <thead><tr><th></th><th>Tool</th><th class="count">Count</th><th>Slot<br>Len(ml)</th><th>Type</th><th>Finish<br>Size(ml)</th><th>+Tol<br>(ml)</th><th>-Tol<br>(ml)</th><th>Drill<br>Size(ml)</th><th>Drill<br>Des</th><th class="cut"><br>Source</th></tr></thead>
          <tbody>
            <tr><td><svg class="sym" viewBox="0 0 19 19"><path d="M4 10h11M9 4v12" stroke="#000"/><text x="13" y="7">A</text></svg></td><td><button>T01</button></td><td class="num">648</td><td class="w focus"><input class="bare" aria-label="T01 slot length"></td><td class="y"><span class="choice"><select aria-label="T01 type"><option>Via</option></select></span></td><td class="y"><span class="field"><input aria-label="T01 finish size" value="11.81"></span></td><td class="y"><span class="field"><input aria-label="T01 plus tolerance" value="0"></span></td><td class="y"><span class="field"><input aria-label="T01 minus tolerance" value="0"></span></td><td class="w"><span class="field"><input aria-label="T01 drill size" value="15.748"></span></td><td class="w"><span class="field"><input aria-label="T01 designator"></span></td><td></td></tr>
            <tr><td><svg class="sym" viewBox="0 0 19 19"><path d="M4 10h11M9 4v12" stroke="#000"/><text x="13" y="7">B</text></svg></td><td><button>T02</button></td><td class="num">21</td><td class="w"><span class="field"><input aria-label="T02 slot length"></span></td><td class="y"><span class="choice"><select aria-label="T02 type"><option>Plated</option></select></span></td><td class="y"><span class="field"><input aria-label="T02 finish size" value="27.56"></span></td><td class="y"><span class="field"><input aria-label="T02 plus tolerance" value="0"></span></td><td class="y"><span class="field"><input aria-label="T02 minus tolerance" value="0"></span></td><td class="w"><span class="field"><input aria-label="T02 drill size" value="31.496"></span></td><td class="w"><span class="field"><input aria-label="T02 designator"></span></td><td></td></tr>
            <tr><td><svg class="sym" viewBox="0 0 19 19"><path d="M4 10h11M9 4v12" stroke="#000"/><text x="13" y="7">C</text></svg></td><td><button class="current">T03</button></td><td class="num">3</td><td class="w"><span class="field"><input aria-label="T03 slot length"></span></td><td class="y"><span class="choice"><select aria-label="T03 type"><option>NPlated</option></select></span></td><td class="y"><span class="field"><input aria-label="T03 finish size" value="43.31"></span></td><td class="y"><span class="field"><input aria-label="T03 plus tolerance" value="0"></span></td><td class="y"><span class="field"><input aria-label="T03 minus tolerance" value="0"></span></td><td class="w"><span class="field"><input aria-label="T03 drill size" value="43.307"></span></td><td class="w"><span class="field"><input aria-label="T03 designator"></span></td><td></td></tr>
            <tr><td><svg class="sym" viewBox="0 0 19 19"><path d="M4 10h11M9 4v12" stroke="#000"/><text x="13" y="7">D</text></svg></td><td><button>T04</button></td><td class="num">7</td><td class="w"><span class="field"><input aria-label="T04 slot length"></span></td><td class="y"><span class="choice"><select aria-label="T04 type"><option>Plated</option></select></span></td><td class="y"><span class="field"><input aria-label="T04 finish size" value="86.61"></span></td><td class="y"><span class="field"><input aria-label="T04 plus tolerance" value="0"></span></td><td class="y"><span class="field"><input aria-label="T04 minus tolerance" value="0"></span></td><td class="w"><span class="field"><input aria-label="T04 drill size" value="90.551"></span></td><td class="w"><span class="field"><input aria-label="T04 designator"></span></td><td></td></tr>
            <tr><td></td><td><button>Total</button></td><td class="num">679</td><td></td><td></td><td></td><td></td><td></td><td></td><td></td><td></td></tr>
          </tbody>
        </table>
      </div>
    </div>
    <div class="mark mark-tool"></div>
  </section>

  <div class="badge">91</div>
  <div class="ime"><svg width="26" height="26" viewBox="0 0 26 26"><path d="M1 4L21 0l4 22-20 4z" fill="#2bb52b"/><path d="M20 7q-5-3-11-1-4 4 2 6 9 1 8 6-4 5-12 1" fill="none" stroke="#fff" stroke-width="4"/></svg><div><span>英</span><svg width="90" height="18" viewBox="0 0 90 18"><path d="M8 4q2 6-6 8M20 6h4M40 5h14v9H40zM44 5v9M49 5v9M87 3q-8 3-7 9" fill="none" stroke="#556" stroke-width="2"/><circle cx="68" cy="6" r="3" fill="#bbc"/></svg></div></div>
</div>
</body>
</html>
```
FILE: styles.css
```css
* { box-sizing: border-box; }
:root {
  --teal: #54cdaf;
  --pale: #9bdcdc;
  --ice: #b3ffff;
  --cream: #ffffcc;
  --amber: #ffc64d;
  --mono: "Liberation Mono", monospace;
  --ui: "Open Sans", "Noto Sans CJK SC", sans-serif;
}
body { margin: 0; background: #000; overflow: hidden; font: bold 15px/16px var(--mono); color: #000; }
button, input, select { font: inherit; color: inherit; margin: 0; padding: 0; border: 0; background: none; border-radius: 0; appearance: none; outline: 0; }
ul, p, h1, h2 { margin: 0; padding: 0; list-style: none; }
svg { display: block; }
.defs { position: absolute; width: 0; height: 0; }
.desktop { position: relative; height: 100vh; overflow: hidden; display: flex; }
.frame-edge { flex: none; width: 9px; background: linear-gradient(90deg, #111 0 1px, #777 1px 2px, #0c0e10 2px 6px, #888 6px 7px, #000 7px 8px, #2b6050 8px); }
.editor { flex: 1; min-width: 0; display: flex; flex-direction: column; }

.titlebar { flex: none; height: 22px; display: flex; gap: 4px; background: radial-gradient(circle at 500px 18px, #6a808c 0 8px, transparent 40px), linear-gradient(90deg, #565a5c 0, #85898b 15%, #7f8a8c 22%, #2a3033 30%, #0a0c0e 45%, #050708); border-bottom: 1px solid #999; }
.titlebar h1 { flex: 1; font: 12px/14px var(--ui); text-shadow: 0 0 5px #bbb; }
.win-buttons { display: flex; height: 19px; border: 1px solid #ffffff80; border-top: 0; border-radius: 0 0 4px 4px; overflow: hidden; }
.win-buttons button { width: 28px; display: flex; align-items: center; justify-content: center; border-right: 1px solid #ffffff70; color: #fff; font: bold 16px/16px var(--ui); text-shadow: 0 0 2px #333; }
.win-buttons .close { width: 46px; border: 0; padding-bottom: 4px; }
.win-buttons .min { width: 12px; height: 4px; background: #fff; border: 1px solid #888; }
.win-buttons .max { width: 11px; height: 9px; border: 3px solid #fff; outline: 1px solid #777; }
.win-buttons .hot { background: linear-gradient(#e0a090, #c0301c 50%, #d86040); }
.main-buttons { height: 12px; margin-right: -8px; }

.topbar { flex: none; height: 57px; display: flex; gap: 2px; background: #111; border-top: 1px solid #445; }
.menubar { flex: 1; display: flex; align-items: center; gap: 18px; padding: 0 14px 2px; background: var(--pale); border: 2px solid #c4f0f0; border-right-color: #5c8c8c; border-bottom-color: #d0f5f5; font: bold 14px/16px "Liberation Serif", serif; box-shadow: inset -1px -2px #5c8c8c; }
.menubar u { text-underline-offset: 4px; }
.menubar .help { margin-left: auto; }
.brand { width: 405px; display: flex; padding-left: 4px; background: var(--pale); border-top: 2px solid #5c8c8c; border-bottom: 3px solid #d0f5f5; border-left: 2px solid #5c8c8c; overflow: hidden; white-space: nowrap; }
.logo { display: flex; align-items: center; width: 162px; height: 50px; color: #000080; font: bold italic 32px/36px "Liberation Sans", sans-serif; }
.product { width: 146px; display: flex; flex-direction: column; align-items: center; font: bold 24px/28px "Liberation Serif", serif; }
.product em { font-size: 14px; line-height: 22px; }
.clock { display: flex; flex-direction: column; font-style: italic; line-height: 15px; padding-top: 2px; }
.clock .time { padding-left: 12px; }
.pause { width: 11px; height: 9px; margin: 6px 0 0 68px; border: solid #f00; border-width: 0 4px; }

.workspace { flex: 1; min-height: 0; display: flex; }
.side { flex: none; width: 154px; display: flex; flex-direction: column; background: #54b59c; padding: 2px 0; }
.job { padding: 0 2px; }
.job p { height: 20px; padding: 1px 2px; background: var(--pale); border: 1px solid #000; margin-bottom: -1px; white-space: nowrap; }
.matrix { margin-top: 3px; padding: 2px; border: 1px solid #000; background: var(--teal); }
.matrix button { display: block; width: 100%; height: 21px; padding-left: 2px; text-align: left; background: var(--pale); border: 2px solid #d0f5f5; border-right-color: #5c8c8c; border-bottom-color: #5c8c8c; }
.layers { flex: 1; margin-top: 3px; background: var(--teal); border-left: 4px solid #2f6f5e; border-top: 2px solid #2f6f5e; border-right: 2px solid #a8eedb; border-bottom: 2px solid #a8eedb; }
.layer-frame { width: 123px; padding: 1px 2px 7px 1px; border: 1px solid #000; border-right: 2px solid #a8eedb; box-shadow: inset -1px 0 #000; }
.layer-frame ul { background: #000; padding: 1px 0 1px 2px; margin-bottom: 3px; width: 118px; }
.layer-frame label { display: flex; gap: 2px; height: 16px; padding: 1px 0; font: bold 12px/14px var(--mono); }
.layer-frame input { flex: none; width: 14px; height: 14px; background: #fff; border: 2px solid #fff; box-shadow: inset 0 0 0 2px #000; }
.layer-frame input.work { border-color: #0000a8; }
.layer-frame i { width: 14px; height: 14px; }
.layer-frame i.shown { background: #409800; }
.layer-frame i.active { background: #f00; }
.layer-frame span { width: 81px; display: flex; justify-content: space-between; align-items: center; padding: 0 2px 0 1px; background: var(--pale); }
.layer-frame span svg { width: 8px; height: 8px; }
.layer-frame .white { background: #fff; }
.layer-frame .mask { background: #00a67d; color: #103028; }
.layer-frame .amber { background: var(--amber); }
.layer-frame .steel { background: #9ab4bf; }
.layer-frame .silver { background: #d8d8d8; }
.selected { margin: 1px 2px; height: 20px; padding: 0 3px; background: var(--amber); border: 1px solid #000; font: bold 12px/18px var(--mono); }
.canvas { flex: 1; min-width: 0; overflow: hidden; }

.tools { flex: none; width: 155px; overflow: hidden; display: flex; flex-direction: column; }
.palette { flex: none; display: grid; grid-template-columns: repeat(4, 38px); grid-auto-rows: 38px; gap: 2px; padding: 2px 0 2px 1px; width: 160px; border-left: 1px solid #2f6f5e; }
.view-tools { border-bottom: 2px solid #a8eedb; }
.edit-tools { border-bottom: 2px solid #444; padding-bottom: 0; }
.palette button { background: var(--pale); border: 3px solid #d0f5f5; border-right-color: #5c8c8c; border-bottom-color: #5c8c8c; padding: 1px; }
.palette svg { width: 30px; height: 30px; border: 1px solid #000; }
.edit-tools button { background: #d0d0d0; border-color: #f0f0f0 #888 #888 #f0f0f0; }
.edit-tools .white { background: #fff; border-color: #fff #aaa #aaa #fff; }
.edit-tools .pick { background: var(--amber); border-color: #ffe9b5 #a58134 #a58134 #ffe9b5; }
.palette .red { border-color: #b01c1c; }
.palette .red svg { border-color: #700; }
.overview { flex: 1; min-height: 0; overflow: hidden; border-top: 1px solid #2f6f5e; }
.coords { flex: none; height: 47px; padding: 7px 0 0 22px; display: flex; flex-direction: column; background: var(--teal); border-top: 2px solid #a8eedb; border-bottom: 2px solid #a8eedb; line-height: 15px; box-shadow: inset 0 2px #2f6f5e; font-weight: normal; white-space: nowrap; }

.command { flex: none; height: 36px; display: flex; border-top: 1px solid #000; border-bottom: 3px solid #6b8c8c; background: var(--cream); }
.command > button { width: 32px; padding: 4px; border-right: 2px solid #000; }
.command > button svg { width: 23px; height: 23px; border: 1px solid #000; outline: 2px solid #d8d8a8; }
.command > .grid-on { width: 31px; border: 1px solid #000; border-left: 0; background: var(--teal); }
.command > .grid-on svg { background: #fdf3c8; }
.command label { width: 48px; line-height: 30px; padding-left: 3px; font-size: 12px; white-space: nowrap; }
.entry { flex: 1; display: flex; border: 1px solid #000; padding: 2px; }
.entry .field { border-color: #a9a98a; }
.units { width: 72px; padding: 2px 0 2px 6px; background: var(--teal); overflow: hidden; }
.units button { width: 80px; height: 28px; text-align: left; padding-left: 5px; border: 2px solid #a8eedb; border-bottom-color: #2f6f5e; }
.status { flex: none; height: 21px; background: var(--ice); border-top: 1px solid #000; border-left: 1px solid #000; }

.window { position: absolute; display: flex; flex-direction: column; border: 1px solid #aaa; border-radius: 7px 7px 0 0; overflow: hidden; box-shadow: 0 0 12px 2px #000; }
.window header { flex: none; height: 28px; display: flex; gap: 5px; padding: 0 4px 0 6px; }
.window header > svg { margin-top: 6px; flex: none; }
.window h2 { flex: 1; font: 12px/27px var(--ui); text-shadow: 0 0 8px #fff, 0 0 8px #fff; }

.popview { left: 1071px; top: 155px; width: 680px; height: 545px; background: linear-gradient(90deg, #70757a 0, #40464a 150px, #050708 260px, #050708 420px, #303236 640px); }
.popview .win-buttons .close { width: 48px; }
.pop-body { flex: 1; min-height: 0; display: flex; margin: 0 6px 0 7px; border: 1px solid #888; background: var(--teal); }
.pop-canvas { flex: 1; min-width: 0; overflow: hidden; background: #409800; border: 2px solid #2f6f5e; border-right: 3px solid #a8eedb; }
.pop-tools { width: 34px; display: flex; flex-direction: column; gap: 2px; padding-top: 1px; background: linear-gradient(#000 0 245px, var(--teal) 245px); }
.pop-tools button { width: 33px; height: 33px; padding: 3px; background: var(--pale); border: 3px solid #a8eedb; border-right-color: #3f8f7c; border-bottom-color: #3f8f7c; }
.pop-tools svg { width: 21px; height: 21px; border: 1px solid #000; }

.lister { left: 197px; top: 600px; width: 874px; height: 460px; background: linear-gradient(90deg, #2a2f32 0, #555c5c 70px, #52a83c 85px); padding: 0 5px; }
.lister header { padding: 0 0 0 1px; margin-right: -2px; }
.lister nav { flex: none; height: 20px; display: flex; gap: 14px; padding-left: 7px; border-top: 1px solid #000; background: linear-gradient(#fff, #dfe3f4 60%, #d8dcf0); border-bottom: 1px solid #b8bcd0; font: 12px/18px var(--ui); color: #777; }
.report { flex: 1; min-height: 0; padding: 0 9px; background: #fff; overflow: hidden; font-size: 13px; line-height: 16px; }
.report p { height: 16px; white-space: pre; }
.report .head { display: flex; gap: 33px; }
.report table { width: 700px; table-layout: fixed; border-collapse: collapse; }
.report th, .report td { height: 16px; padding: 0; text-align: left; font-weight: bold; white-space: pre; }
.c-tool { width: 80px; } .c-size { width: 184px; } .c-type { width: 112px; } .c-count { width: 160px; } .c-travel { width: 164px; }
.mark { position: absolute; border: 3px solid #e31ee3; box-shadow: 1px 2px 5px #0009, inset 1px 2px 5px #0009; pointer-events: none; }
.mark-report { left: 6px; top: 276px; width: 696px; height: 44px; }
.mark-tool { left: 16px; top: 189px; width: 731px; height: 48px; }

.drill { left: 997px; top: 636px; width: 780px; height: 400px; padding: 0 5px 0 6px; background: linear-gradient(90deg, #cfe2f4 0, #c8dbe4 60px, #8cb493 110px, #437a45 150px, #43854a 270px, #07100c 340px, #07100c 440px, #437a45 480px, #5f9068 610px, #b8cdd4 700px, #777 760px); }
.drill header { padding: 0; height: 27px; margin-right: -1px; }
.drill-body { flex: 1; min-height: 0; display: flex; flex-direction: column; background: var(--teal); border: 1px solid #dde; border-top-color: #ccc; }
.params { flex: none; height: 34px; display: flex; }
.params.second { height: 28px; }
.box { display: flex; align-items: center; background: var(--pale); border: 1px solid #000; padding: 2px; }
.box > button, .grid-area button { border: 2px solid #d0f5f5; border-right-color: #4f7f7f; border-bottom-color: #4f7f7f; text-align: left; }
.box > button { flex: 1; align-self: stretch; display: flex; justify-content: space-between; align-items: center; padding: 0 14px 0 2px; white-space: nowrap; }
.layer-box { width: 168px; }
.layer-value { width: 109px; }
.slots { width: 187px; margin-left: 150px; padding-left: 9px; gap: 7px; }
.thick { width: 307px; padding-left: 1px; white-space: nowrap; }
.thick .field { flex: none; width: 104px; margin: 0 4px 0 13px; }
.user { width: 176px; background: var(--teal); }
.user > button { padding-right: 4px; background: var(--pale); }
.user-value { width: 127px; margin-left: 3px; }
.field { flex: 1; align-self: stretch; display: flex; padding: 1px 0 0 4px; gap: 1px; border: 2px solid #5c8c8c; border-right-color: #d0f5f5; border-bottom-color: #d0f5f5; }
.field::before { content: ""; flex: none; height: 15px; border-left: 1px dotted #000; }
.field input { width: 100%; min-width: 0; height: 14px; }
.choice { flex: 1; align-self: stretch; display: flex; align-items: center; border: 2px solid #d0f5f5; border-right-color: #4f7f7f; border-bottom-color: #4f7f7f; padding-right: 5px; }
.choice select { flex: 1; min-width: 0; padding-left: 4px; }
.choice::after { content: ""; width: 12px; height: 7px; border: 2px solid #c8eee8; border-right-color: #5c7c7c; border-bottom-color: #5c7c7c; }
.slots select { padding-left: 30px; }
.grid-area { flex: 1; min-height: 0; margin: 0 3px 3px; border: 2px solid #2f6f5e; border-right-color: #a8eedb; border-bottom-color: #a8eedb; overflow: hidden; }
.grid-area table { table-layout: fixed; width: 833px; border-collapse: collapse; }
.grid-area th, .grid-area td { border: 2px solid #000; padding: 1px 2px; }
.grid-area th { height: 38px; background: var(--ice); line-height: 15px; padding: 0; }
.grid-area th.cut, .grid-area th.count { text-align: left; }
.grid-area th.count { padding-left: 2px; }
.grid-area td { height: 33px; }
.grid-area td > button { width: 62px; height: 28px; padding-left: 3px; display: block; border-color: #a8eedb #2f6f5e #2f6f5e #a8eedb; }
.grid-area td > .current { background: var(--amber); }
.grid-area .num { text-align: right; font-size: 14px; }
.d-mark { width: 26px; } .d-tool { width: 68px; } .d-count { width: 60px; } .d-wide { width: 83px; } .d-type { width: 115px; } .d-tol { width: 74px; }
.sym { width: 19px; height: 19px; background: #fff; border: 1px solid #000; font: 8px/8px "Liberation Serif", serif; }
.y { background: var(--cream); }
.w { background: #fff; }
.grid-area .field, .grid-area .choice, .bare { height: 28px; width: 100%; border: 2px solid #a9a98a; border-right-color: #c8c8a0; border-bottom-color: #c8c8a0; }
.grid-area .choice { border-color: #e0e0b0 #909070 #909070 #e0e0b0; }
.grid-area .choice::after { border-color: #d8d8b0 #909070 #909070 #d8d8b0; }
.grid-area .w .field, .bare { border-color: #999 #ccc #ccc #999; }
.bare { display: block; }
.grid-area .focus { border-style: double; border-width: 2px; border-style: solid; box-shadow: inset 0 0 0 1px #000; }

.badge { position: absolute; left: 1901px; top: 941px; width: 47px; height: 47px; padding-left: 4px; border: 2px solid #ddd; border-radius: 50%; background: radial-gradient(circle at 50% 30%, #ff5a3c, #e0220f); color: #fff; font: bold 12px/43px var(--ui); }
.ime { position: absolute; left: 1754px; top: 1012px; display: flex; align-items: flex-start; }
.ime div { display: flex; gap: 12px; width: 139px; height: 24px; margin-top: 3px; padding-left: 6px; overflow: hidden; background: #fff; color: #445; font: bold 14px/18px "Noto Sans CJK SC", sans-serif; }
.ime div svg { flex: none; }
```
